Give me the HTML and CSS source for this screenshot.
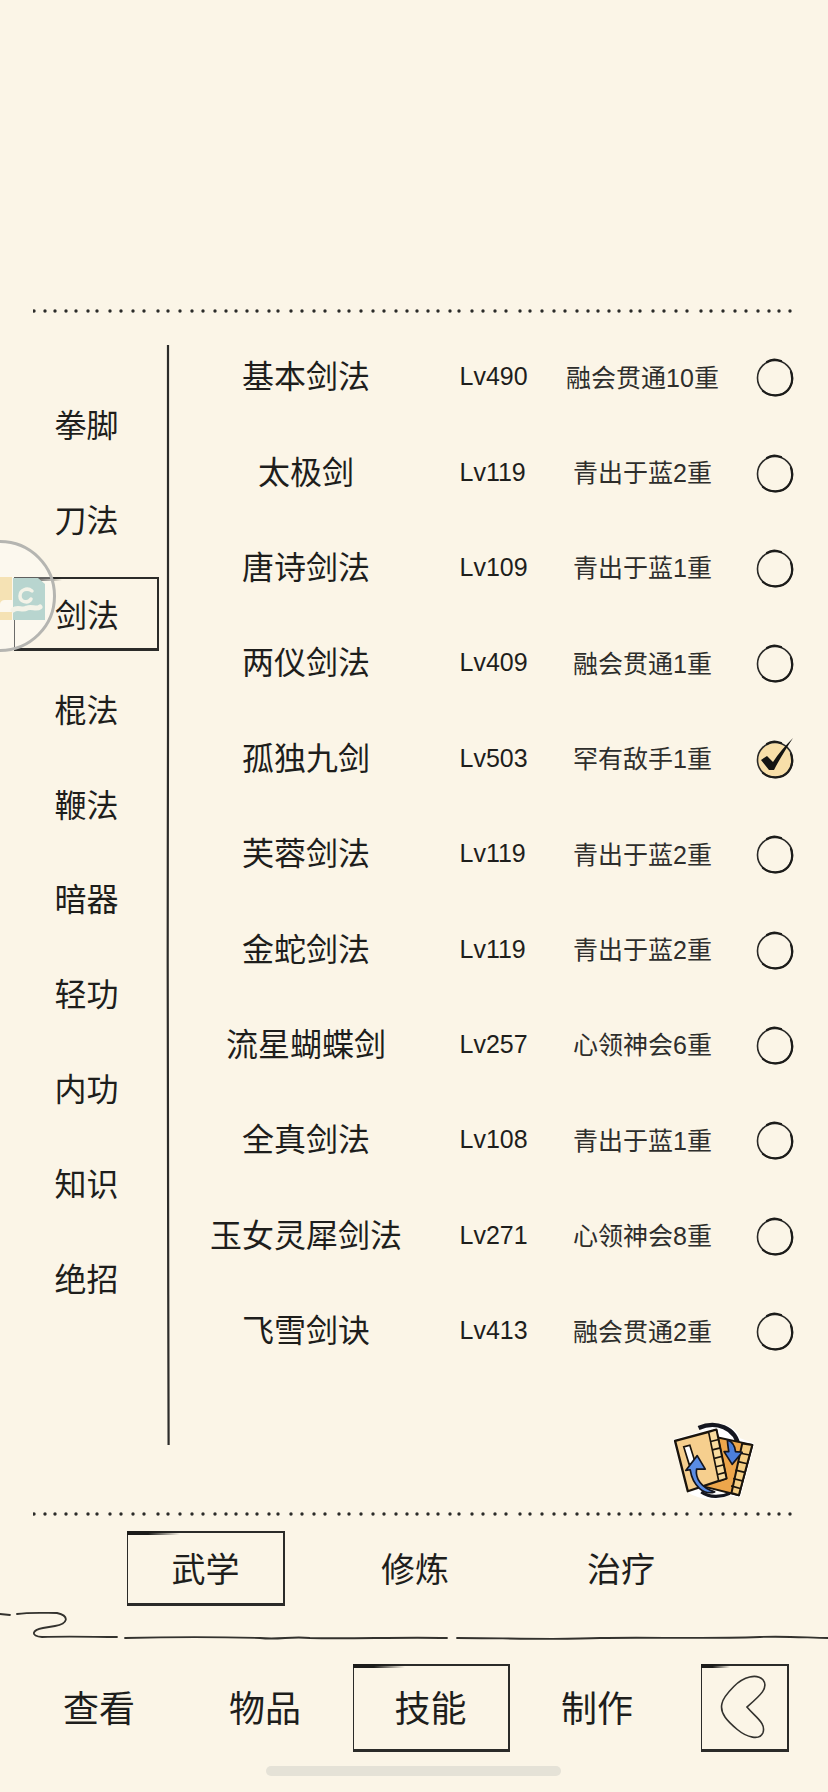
FILE: index.html
```html
<!DOCTYPE html>
<html lang="zh-CN">
<head>
  <meta charset="UTF-8" />
  <meta name="viewport" content="width=device-width, initial-scale=1.0" />
  <title>武学</title>
  <link rel="stylesheet" href="styles.css">
</head>
<body>
  <svg class="defs" width="0" height="0" aria-hidden="true">
    <symbol id="ring" viewBox="0 0 40 40">
      <circle cx="20" cy="20" r="17.5" fill="none" stroke="#2a2a28" stroke-width="1.6" />
      <path d="M8 33C15 39 27 39 33 32C37 27 38 20 36 14M26 3C21 1 16 1 12 4" fill="none" stroke="#1c1c1a" stroke-width="2.2" stroke-linecap="round" />
    </symbol>
    <symbol id="dots" viewBox="0 0 762 8">
      <path d="M1 4H762" fill="none" stroke="#2b2b29" stroke-width="3.4" stroke-linecap="round" stroke-dasharray="0 11 0 10 0 11 0 10 0 12 0 9 0 13 0 11 0 12 0 11 0 14 0 10 0 12 0 12 0 11 0 12" />
    </symbol>
  </svg>

  <div class="page">
    <div class="top-blank"></div>
    <svg class="dots"><use href="#dots" /></svg>

    <div class="main">
      <ul class="side">
        <li class="side-item"><span>拳脚</span></li>
        <li class="side-item"><span>刀法</span></li>
        <li class="side-item"><span class="sketch active">剑法</span></li>
        <li class="side-item"><span>棍法</span></li>
        <li class="side-item"><span>鞭法</span></li>
        <li class="side-item"><span>暗器</span></li>
        <li class="side-item"><span>轻功</span></li>
        <li class="side-item"><span>内功</span></li>
        <li class="side-item"><span>知识</span></li>
        <li class="side-item"><span>绝招</span></li>
      </ul>

      <svg class="rule" viewBox="0 0 6 1100" preserveAspectRatio="none">
        <path d="M3 0C2.4 200 3.4 340 2.8 500C2.4 700 3.2 900 3.6 1100" fill="none" stroke="#2c2c2a" stroke-width="2.2" />
      </svg>

      <div class="content">
        <div class="row">
          <span class="name">基本剑法</span><span class="lv">Lv490</span><span class="rank">融会贯通10重</span>
          <svg class="check"><use href="#ring" /></svg>
        </div>
        <div class="row">
          <span class="name">太极剑</span><span class="lv">Lv119</span><span class="rank">青出于蓝2重</span>
          <svg class="check"><use href="#ring" /></svg>
        </div>
        <div class="row">
          <span class="name">唐诗剑法</span><span class="lv">Lv109</span><span class="rank">青出于蓝1重</span>
          <svg class="check"><use href="#ring" /></svg>
        </div>
        <div class="row">
          <span class="name">两仪剑法</span><span class="lv">Lv409</span><span class="rank">融会贯通1重</span>
          <svg class="check"><use href="#ring" /></svg>
        </div>
        <div class="row">
          <span class="name">孤独九剑</span><span class="lv">Lv503</span><span class="rank">罕有敌手1重</span>
          <svg class="check" viewBox="0 0 40 40">
            <circle cx="20" cy="20" r="17" fill="#f8dfa9" />
            <use href="#ring" width="40" height="40" />
            <path d="M6 20L12 16L18 22C23 14 30 6 38 -2C31 9 24 20 19 30L14 30Z" fill="#141412" />
          </svg>
        </div>
        <div class="row">
          <span class="name">芙蓉剑法</span><span class="lv">Lv119</span><span class="rank">青出于蓝2重</span>
          <svg class="check"><use href="#ring" /></svg>
        </div>
        <div class="row">
          <span class="name">金蛇剑法</span><span class="lv">Lv119</span><span class="rank">青出于蓝2重</span>
          <svg class="check"><use href="#ring" /></svg>
        </div>
        <div class="row">
          <span class="name">流星蝴蝶剑</span><span class="lv">Lv257</span><span class="rank">心领神会6重</span>
          <svg class="check"><use href="#ring" /></svg>
        </div>
        <div class="row">
          <span class="name">全真剑法</span><span class="lv">Lv108</span><span class="rank">青出于蓝1重</span>
          <svg class="check"><use href="#ring" /></svg>
        </div>
        <div class="row">
          <span class="name">玉女灵犀剑法</span><span class="lv">Lv271</span><span class="rank">心领神会8重</span>
          <svg class="check"><use href="#ring" /></svg>
        </div>
        <div class="row">
          <span class="name">飞雪剑诀</span><span class="lv">Lv413</span><span class="rank">融会贯通2重</span>
          <svg class="check"><use href="#ring" /></svg>
        </div>

        <svg class="swap" viewBox="150 60 250 250">
          <path d="M162 128L240 106C265 70 330 75 352 125L392 140L352 290L320 285C280 305 235 295 205 278L162 128Z" fill="#fff" stroke="#fff" stroke-width="12" stroke-linejoin="round" />
          <path d="M232 90C280 68 345 85 352 150" fill="none" stroke="#14161f" stroke-width="13" />
          <path d="M290 118L392 140L352 290L240 262Z" fill="#eda64b" stroke="#1a140c" stroke-width="6" stroke-linejoin="round" />
          <path d="M362 136L392 140L352 290L330 283Z" fill="#f5cf85" stroke="#1a140c" stroke-width="6" stroke-linejoin="round" />
          <path d="M357 165L384 170M350 190L377 196M342 215L370 222M335 240L362 247M329 262L356 270" stroke="#1a140c" stroke-width="5" />
          <path d="M162 128L285 95L315 240L200 278Z" fill="#f6cf8e" stroke="#1a140c" stroke-width="7" stroke-linejoin="round" />
          <path d="M262 102L285 95L315 240L292 248Z" fill="#f9dc9f" stroke="#1a140c" stroke-width="5" stroke-linejoin="round" />
          <path d="M268 130L292 124M273 155L297 149M279 180L303 174M284 205L308 199M289 228L312 222" stroke="#1a140c" stroke-width="5" />
          <path d="M188 146L206 141L222 192L204 198Z" fill="#fff" stroke="#1a140c" stroke-width="5" />
          <path d="M318 125C332 130 340 140 342 160L362 162L332 198L308 160L322 160C320 148 318 135 318 125Z" fill="#4c7fdc" stroke="#14161f" stroke-width="5" stroke-linejoin="round" />
          <path d="M226 212C222 240 240 268 280 280C250 290 215 265 207 214L194 216L228 172L252 212Z" fill="#5a8ce4" stroke="#14161f" stroke-width="5" stroke-linejoin="round" />
          <path d="M240 280C265 298 300 296 325 284" fill="none" stroke="#14161f" stroke-width="9" />
        </svg>
      </div>
    </div>

    <svg class="dots"><use href="#dots" /></svg>

    <div class="tabs">
      <span class="sketch tab">武学</span>
      <span class="tab">修炼</span>
      <span class="tab">治疗</span>
    </div>

    <svg class="wave" viewBox="0 1610 828 30">
      <path d="M0 1614L10 1615M17 1614C30 1612 46 1613 57 1613C70 1616 68 1624 55 1626L43 1628C32 1630 30 1636 42 1637C70 1636 95 1637 117 1637M125 1638C170 1637 220 1637 260 1638C280 1640 290 1636 310 1638C350 1639 400 1637 447 1638M457 1638C500 1638 560 1640 600 1638C650 1637 700 1639 760 1637C790 1636 810 1638 828 1638" fill="none" stroke="#33322e" stroke-width="1.8" stroke-linecap="round" />
    </svg>

    <div class="nav">
      <span class="nav-item">查看</span>
      <span class="nav-item">物品</span>
      <span class="nav-item sketch">技能</span>
      <span class="nav-item">制作</span>
      <span class="back sketch">
        <svg viewBox="860 222 265 260">
          <path d="M960 285C990 255 1030 245 1050 265C1070 290 1040 315 1000 350C1030 385 1060 400 1050 430C1040 455 1000 445 970 420C940 395 915 370 922 340C925 320 945 300 960 285Z" fill="none" stroke="#33322e" stroke-width="5" />
        </svg>
      </span>
    </div>

    <div class="home-bar"></div>

    <div class="float-ball">
      <svg viewBox="0 0 56 112">
        <path d="M0 37H12V60H5C2 60 0 62 0 64Z" fill="#f5e2b4" />
        <path d="M0 72H12V80H0Z" fill="#f5e2b4" />
        <path d="M13 38H38L45 44V80H13Z" fill="#b8d5cf" />
        <path d="M32 51C27 47 20 50 20 56C20 62 28 64 31 59" fill="none" stroke="#f4f3e8" stroke-width="3.5" stroke-linecap="round" />
        <path d="M13 70C18 66 22 71 27 68C32 66 36 70 40 67" fill="none" stroke="#f4f3e8" stroke-width="5" stroke-linecap="round" />
      </svg>
    </div>
  </div>
</body>
</html>
```

FILE: styles.css
```css
* {
  box-sizing: border-box;
}
html, body {
  margin: 0;
  padding: 0;
}
body {
  background: #fbf5e7;
  color: #1e1e1c;
  font-family: "Liberation Sans", "Noto Sans CJK SC", sans-serif;
}
ul {
  list-style: none;
  margin: 0;
  padding: 0;
}
.defs {
  position: absolute;
}
.page {
  position: relative;
  width: 828px;
  height: 1792px;
  overflow: hidden;
}
.top-blank {
  height: 307px;
}
.dots {
  display: block;
  width: 762px;
  height: 8px;
  margin-left: 33px;
}
.main {
  display: flex;
  height: 1195px;
}

/* left column */
.side {
  width: 167px;
  padding: 61px 8px 0 13px;
}
.side-item {
  display: flex;
  align-items: center;
  justify-content: center;
  height: 94.8px;
  padding-left: 1px;
  font-size: 32px;
}
.sketch {
  position: relative;
  display: flex;
  align-items: center;
  justify-content: center;
  border-style: solid;
  border-color: #2b2b29;
  border-width: 2px 2px 3px 1.5px;
}
.sketch::before {
  content: "";
  position: absolute;
  left: -1px;
  top: -2px;
  width: 34%;
  height: 4px;
  background: linear-gradient(90deg, #1c1c1a 40%, rgba(28,28,26,0));
}
.active {
  width: 146px;
  height: 74px;
  margin-top: 2px;
  padding-left: 2px;
}
.rule {
  flex: none;
  width: 6px;
  height: 1100px;
  margin-top: 30px;
  margin-left: -2px;
}

/* skill list */
.content {
  flex: 1;
  padding-top: 13px;
}
.row {
  display: grid;
  grid-template-columns: 270px 98px 202px 36px;
  align-items: center;
  height: 95.4px;
  column-gap: 0;
}
.name {
  padding-bottom: 3px;
  font-size: 32px;
  text-align: center;
}
.lv {
  padding: 2px 0 0 18.5px;
  font-size: 25px;
}
.rank {
  padding-left: 5px;
  font-size: 25px;
  text-align: center;
  color: #2e2e2c;
}
.check {
  width: 40px;
  height: 40px;
  margin: 5px 0 0 13.5px;
  overflow: visible;
}
.swap {
  display: block;
  width: 84px;
  height: 84px;
  margin: 41px 0 0 500px;
}

/* lower tabs */
.tabs {
  display: grid;
  grid-template-columns: 158px 158px 152px;
  column-gap: 51px;
  height: 75px;
  margin: 13px 0 0 127px;
}
.tab {
  display: flex;
  align-items: center;
  justify-content: center;
  padding-bottom: 2px;
  font-size: 34px;
}
.wave {
  display: block;
  width: 828px;
  height: 30px;
  margin-top: 4px;
}
.nav {
  display: grid;
  grid-template-columns: repeat(4, 166px) 88px;
  height: 86px;
  margin-top: 24px;
  padding-left: 16px;
}
.nav-item {
  display: flex;
  align-items: center;
  justify-content: center;
  padding-bottom: 4px;
  font-size: 36px;
}
.nav-item.sketch {
  width: 157px;
  justify-self: center;
}
.back {
  margin-left: 21px;
  width: 88px;
}
.back svg {
  display: block;
  width: 100%;
  height: 100%;
}
.home-bar {
  width: 295px;
  height: 10px;
  margin: 16px 0 0 266px;
  border-radius: 5px;
  background: #e5e2d7;
}

/* assistive ball over the left edge */
.float-ball {
  position: absolute;
  left: -56px;
  top: 540px;
  width: 112px;
  height: 112px;
  border: 3px solid #b5b5b1;
  border-radius: 50%;
  background: rgba(255,255,255,0.3);
}
.float-ball svg {
  position: absolute;
  left: 53px;
  top: -3px;
  width: 56px;
  height: 112px;
}
```
